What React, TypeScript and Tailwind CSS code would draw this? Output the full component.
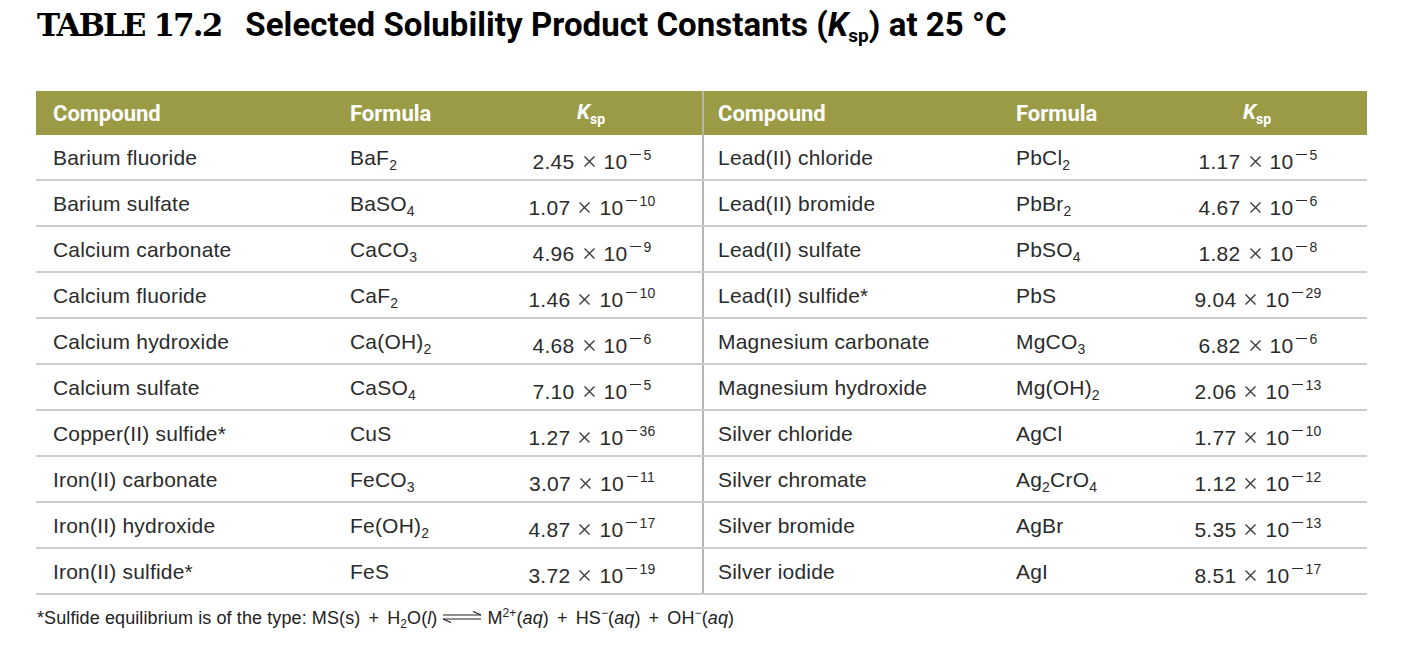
import React from "react";

type Row = [React.ReactNode, React.ReactNode, string, string];

const Sub = ({ children }: { children: React.ReactNode }) => (
  <sub className="text-[14px] align-baseline relative top-[5px]">{children}</sub>
);

const Times = () => (
  <svg width="13" height="13" viewBox="0 0 13 13" className="mx-[8px] self-center relative top-[-1px]">
    <path d="M1.5 1.5 L11.5 11.5 M11.5 1.5 L1.5 11.5" stroke="#3a3a3a" strokeWidth="1.4" />
  </svg>
);

const K = ({ m, e }: { m: string; e: string }) => (
  <span className="whitespace-nowrap flex items-baseline tracking-[0.3px]">
    <span>{m}</span>
    <Times />
    <span>10</span>
    <span className="relative top-[-9px] text-[14px] ml-[3px] flex items-baseline">
      <span className="inline-block w-[11px] h-[1.5px] bg-[#2b2b2b] relative top-[-5px]"></span>
      <span className="ml-[2px]">{e}</span>
    </span>
  </span>
);

const left: Row[] = [
  ["Barium fluoride", <>BaF<Sub>2</Sub></>, "2.45", "5"],
  ["Barium sulfate", <>BaSO<Sub>4</Sub></>, "1.07", "10"],
  ["Calcium carbonate", <>CaCO<Sub>3</Sub></>, "4.96", "9"],
  ["Calcium fluoride", <>CaF<Sub>2</Sub></>, "1.46", "10"],
  ["Calcium hydroxide", <>Ca(OH)<Sub>2</Sub></>, "4.68", "6"],
  ["Calcium sulfate", <>CaSO<Sub>4</Sub></>, "7.10", "5"],
  ["Copper(II) sulfide*", <>CuS</>, "1.27", "36"],
  ["Iron(II) carbonate", <>FeCO<Sub>3</Sub></>, "3.07", "11"],
  ["Iron(II) hydroxide", <>Fe(OH)<Sub>2</Sub></>, "4.87", "17"],
  ["Iron(II) sulfide*", <>FeS</>, "3.72", "19"],
];

const right: Row[] = [
  ["Lead(II) chloride", <>PbCl<Sub>2</Sub></>, "1.17", "5"],
  ["Lead(II) bromide", <>PbBr<Sub>2</Sub></>, "4.67", "6"],
  ["Lead(II) sulfate", <>PbSO<Sub>4</Sub></>, "1.82", "8"],
  ["Lead(II) sulfide*", <>PbS</>, "9.04", "29"],
  ["Magnesium carbonate", <>MgCO<Sub>3</Sub></>, "6.82", "6"],
  ["Magnesium hydroxide", <>Mg(OH)<Sub>2</Sub></>, "2.06", "13"],
  ["Silver chloride", <>AgCl</>, "1.77", "10"],
  ["Silver chromate", <>Ag<Sub>2</Sub>CrO<Sub>4</Sub></>, "1.12", "12"],
  ["Silver bromide", <>AgBr</>, "5.35", "13"],
  ["Silver iodide", <>AgI</>, "8.51", "17"],
];

const Ksp = () => (
  <span className="italic">
    K<sub className="not-italic text-[14px] align-baseline relative top-[5px]">sp</sub>
  </span>
);

const Harpoons = () => (
  <svg width="40" height="12" viewBox="0 0 40 12" className="inline-block mx-[5px] relative top-[-2px]">
    <line x1="1" y1="4" x2="39" y2="4" stroke="#222" strokeWidth="1.2" />
    <path d="M39 4 L31 0.5" stroke="#222" strokeWidth="1.2" fill="none" />
    <line x1="1" y1="8" x2="39" y2="8" stroke="#222" strokeWidth="1.2" />
    <path d="M1 8 L9 11.5" stroke="#222" strokeWidth="1.2" fill="none" />
  </svg>
);

export default function App() {
  const body = "font-['Liberation_Sans',Arial,sans-serif]";
  const head = "font-['Roboto',sans-serif]";
  const rows = left.map((l, i) => [l, right[i]] as const);
  return (
    <div className="w-[1408px] h-[648px] bg-white text-[#2b2b2b] relative">
      <div className="pl-[37px] pt-[4px] h-[88px] flex items-start">
        <div className="flex items-baseline">
          <span className="font-['DejaVu_Serif',serif] font-bold text-[31px] tracking-[-1.9px] text-black leading-[42px]">TABLE 17.2</span>
          <span className={`${head} font-bold text-[33px] text-black ml-[24px] leading-[42px] tracking-[0.05px]`}>
            Selected Solubility Product Constants (<span className="italic">K</span>
            <sub className="text-[19px] align-baseline relative top-[6px]">sp</sub>) at 25 °C
          </span>
        </div>
      </div>
      <div className={`ml-[36px] w-[1331px] ${body}`}>
        <div className={`grid grid-cols-[299px_145px_222px_298px_147px_220px] h-[44px] bg-[#9b9b45] text-white ${head} font-bold text-[22px] mt-[3px]`}>
          <div className="pl-[17px] flex items-center">Compound</div>
          <div className="pl-[15px] flex items-center">Formula</div>
          <div className="flex items-center justify-center text-[21px]"><Ksp /></div>
          <div className="pl-[14px] flex items-center border-l-2 border-[#b5b5b5]">Compound</div>
          <div className="pl-[16px] flex items-center">Formula</div>
          <div className="flex items-center justify-center text-[21px]"><Ksp /></div>
        </div>
        {rows.map(([l, r], i) => (
          <div key={i} className="grid grid-cols-[299px_145px_222px_298px_147px_220px] h-[46px] border-b-2 border-[#cdcdcd] text-[21px] tracking-[0.2px]">
            <div className="pl-[17px] pt-[7px]">{l[0]}</div>
            <div className="pl-[15px] pt-[7px]">{l[1]}</div>
            <div className="flex justify-center pt-[11px] pl-[2px]"><K m={l[2]} e={l[3]} /></div>
            <div className="pl-[14px] pt-[7px] border-l-2 border-[#b5b5b5]">{r[0]}</div>
            <div className="pl-[16px] pt-[7px]">{r[1]}</div>
            <div className="flex justify-center pt-[11px] pl-[2px]"><K m={r[2]} e={r[3]} /></div>
          </div>
        ))}
        <div className={`pt-[10px] text-[18px] text-[#222] pl-[1px] tracking-[0.1px]`}>
          *Sulfide equilibrium is of the type: MS(s) <span className="mx-[3px]">+</span> H<sub className="text-[12px] align-baseline relative top-[4px]">2</sub>O(<span className="italic">l</span>)
          <Harpoons />
          M<sup className="text-[12px] align-baseline relative top-[-7px]">2+</sup>(<span className="italic">aq</span>) <span className="mx-[3px]">+</span> HS<sup className="text-[12px] align-baseline relative top-[-7px]">−</sup>(<span className="italic">aq</span>) <span className="mx-[3px]">+</span> OH<sup className="text-[12px] align-baseline relative top-[-7px]">−</sup>(<span className="italic">aq</span>)
        </div>
      </div>
    </div>
  );
}
